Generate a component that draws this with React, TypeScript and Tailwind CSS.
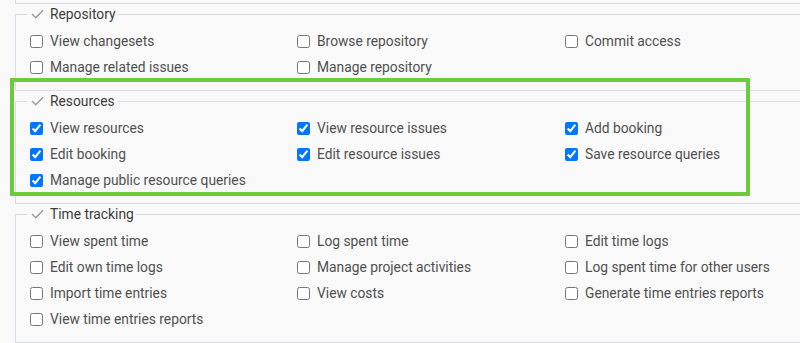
import React from 'react';

interface Section {
  title: string;
  checked: boolean;
  items: string[];
}

const sections: Section[] = [
  {
    title: 'Repository',
    checked: false,
    items: ['View changesets', 'Browse repository', 'Commit access', 'Manage related issues', 'Manage repository'],
  },
  {
    title: 'Resources',
    checked: true,
    items: [
      'View resources',
      'View resource issues',
      'Add booking',
      'Edit booking',
      'Edit resource issues',
      'Save resource queries',
      'Manage public resource queries',
    ],
  },
  {
    title: 'Time tracking',
    checked: false,
    items: [
      'View spent time',
      'Log spent time',
      'Edit time logs',
      'Edit own time logs',
      'Manage project activities',
      'Log spent time for other users',
      'Import time entries',
      'View costs',
      'Generate time entries reports',
      'View time entries reports',
    ],
  },
];

const LegendCheck = () => (
  <svg width="13" height="10" viewBox="0 0 13 10" className="shrink-0">
    <polyline points="1,5 4.8,8.8 12,1.2" fill="none" stroke="#9a9a9a" strokeWidth="1.4" />
  </svg>
);

const PermissionGroup: React.FC<{ section: Section }> = ({ section }) => (
  <fieldset className="border border-[#dadee4] pl-[11px] pt-[4px] pb-[10px] w-[830px]">
    <legend className="pl-[4px] pr-[2px]">
      <span className="flex items-center gap-[6px] h-[20px] text-[13.8px] text-[#3c3c3c]">
        <LegendCheck />
        {section.title}
      </span>
    </legend>
    <div className="grid grid-cols-[267px_268px_268px] pl-[3px]">
      {section.items.map((item) => (
        <label key={item} className="flex items-center h-[26px] gap-[7px] text-[13.8px] text-[#505050] whitespace-nowrap">
          <input type="checkbox" defaultChecked={section.checked} className="m-0 w-[13px] h-[13px] shrink-0" />
          {item}
        </label>
      ))}
    </div>
  </fieldset>
);

export default function App() {
  return (
    <div className="relative w-[800px] h-[343px] overflow-hidden bg-[#f9f9f9] pl-[15px] font-['Roboto',sans-serif]">
      <div className="h-[4px] w-[830px] border-l border-b border-[#dadee4]" />
      {sections.map((s) => (
        <PermissionGroup key={s.title} section={s} />
      ))}
      <div className="absolute left-[10px] top-[78px] w-[740px] h-[118px] border-[4px] border-[#6ccb3c] pointer-events-none" />
    </div>
  );
}
